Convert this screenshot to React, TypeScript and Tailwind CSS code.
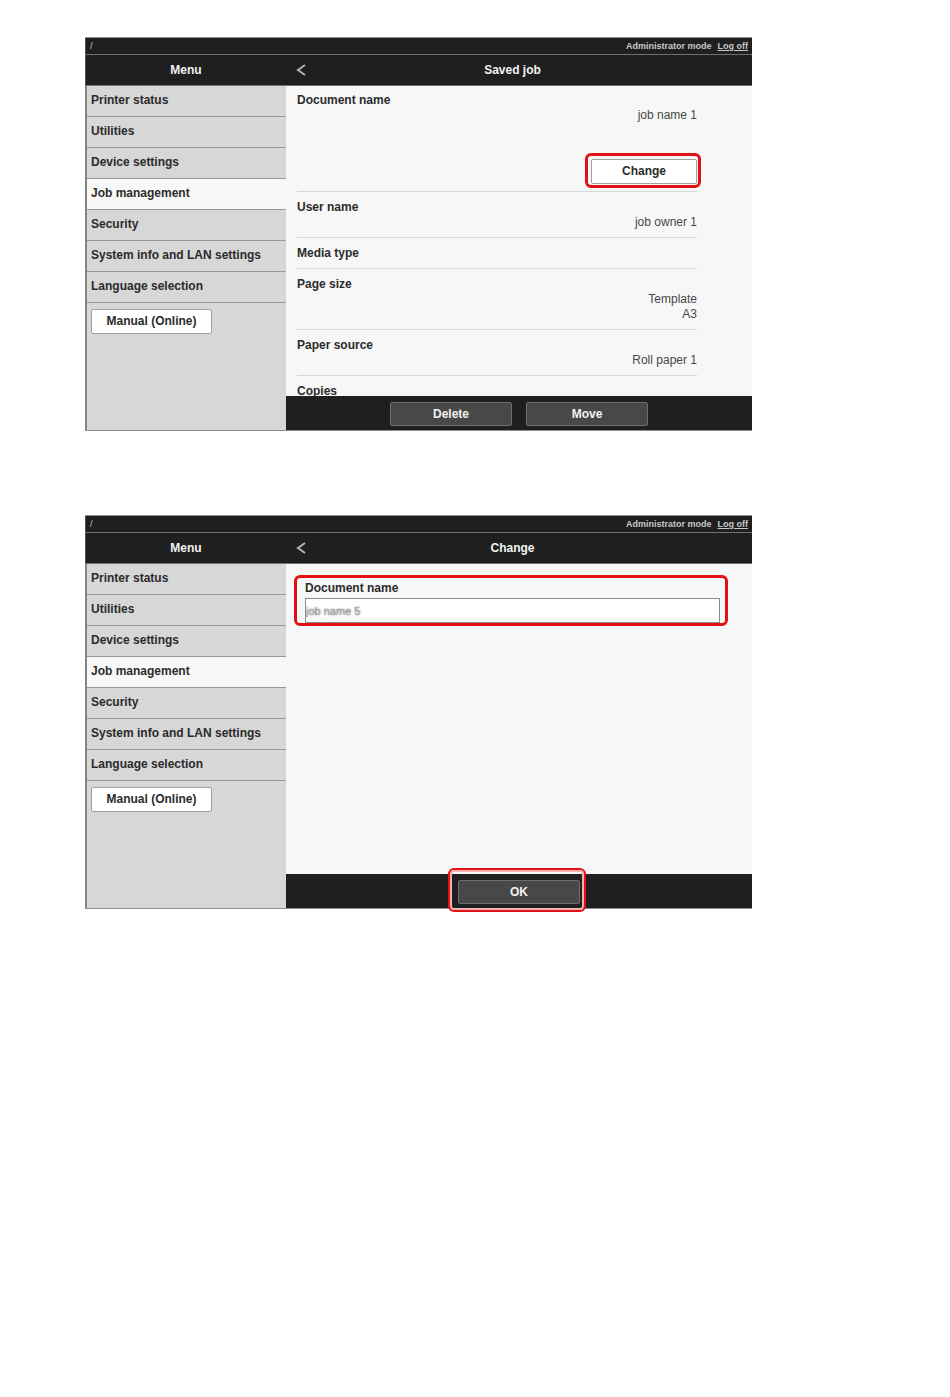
import type { ReactNode } from 'react';

const MENU_ITEMS = [
  'Printer status',
  'Utilities',
  'Device settings',
  'Job management',
  'Security',
  'System info and LAN settings',
  'Language selection',
];

const ACTIVE_ITEM = 'Job management';

function Highlight({ className }: { className: string }) {
  return (
    <span
      aria-hidden="true"
      className={`pointer-events-none absolute rounded-md border-[#e31114] ${className}`}
    />
  );
}

function LightButton({ children, className }: { children: ReactNode; className: string }) {
  return (
    <button
      type="button"
      className={`h-[25px] rounded-xs border border-[#a0a0a0] bg-white text-center font-bold text-[#2b2b2b] ${className}`}
    >
      {children}
    </button>
  );
}

function DarkButton({ children }: { children: ReactNode }) {
  return (
    <button
      type="button"
      className="h-6 w-[122px] rounded-xs border border-[#6e6e6e] bg-[#484848] text-center font-bold text-[#f2f2f2]"
    >
      {children}
    </button>
  );
}

function Sidebar() {
  return (
    <nav className="w-[201px] shrink-0 border-l-2 border-[#858585] bg-[#d7d7d7]">
      <ul className="font-bold text-[#2b2b2b]">
        {MENU_ITEMS.map((item) => (
          <li
            key={item}
            className={`border-b border-[#999999] ${item === ACTIVE_ITEM ? 'bg-[#f8f8f8]' : ''}`}
          >
            <a
              href="#"
              aria-current={item === ACTIVE_ITEM ? 'page' : undefined}
              className="block pt-[7px] pb-2 pl-1 whitespace-nowrap"
            >
              {item}
            </a>
          </li>
        ))}
      </ul>
      <LightButton className="mt-1.5 ml-1 w-[121px]">Manual (Online)</LightButton>
    </nav>
  );
}

function Screen({
  title,
  footer,
  children,
}: {
  title: string;
  footer: ReactNode;
  children: ReactNode;
}) {
  return (
    <section className="w-full max-w-[667px] border-y border-[#8c8c8c]">
      <div className="flex h-4 items-center justify-between border-l border-[#555555] bg-[#1f1f1f] pr-1 pl-1 text-[9px] leading-4 font-bold text-[#c8c8c8]">
        <span className="font-normal">/</span>
        <div className="flex gap-1.5">
          <span>Administrator mode</span>
          <a href="#" className="underline">
            Log off
          </a>
        </div>
      </div>
      <header className="flex h-8 items-center border-y border-l border-y-[#707070] border-l-[#555555] bg-[#1f1f1f] font-bold text-[#f2f2f2]">
        <h2 className="w-[200px] shrink-0 text-center">Menu</h2>
        <button type="button" aria-label="Back" className="flex w-8 shrink-0 pl-2.5">
          <svg width="10" height="12" viewBox="0 0 10 12" fill="none" stroke="#b4b4b4" strokeWidth="2">
            <path d="M9 1 L2 6 L9 11" />
          </svg>
        </button>
        <h1 className="flex-1 pr-[45px] text-center">{title}</h1>
      </header>
      <div className="flex">
        <Sidebar />
        <div className="flex min-w-0 flex-1 flex-col bg-[#f7f7f7]">
          {children}
          <footer className="flex justify-center gap-3.5 bg-[#1f1f1f] pt-1.5 pb-1">{footer}</footer>
        </div>
      </div>
    </section>
  );
}

function Field({ label, values, action }: { label: string; values: string[]; action?: ReactNode }) {
  return (
    <div className="border-b border-[#d8d8d8] pt-2 pb-[7px] first:pt-[7px]">
      <dt className="font-bold text-[#2b2b2b]">{label}</dt>
      {values.map((value) => (
        <dd key={value} className="text-right text-[#484848]">
          {value}
        </dd>
      ))}
      {action}
    </div>
  );
}

export default function App() {
  return (
    <main className="flex flex-col gap-[84px] bg-white pt-[37px] pr-6 pb-16 pl-[85px] font-['Liberation_Sans',Arial,sans-serif] text-[12px] leading-[15px]">
      <Screen
        title="Saved job"
        footer={
          <>
            <DarkButton>Delete</DarkButton>
            <DarkButton>Move</DarkButton>
          </>
        }
      >
        <dl className="h-[310px] overflow-hidden pr-[55px] pl-[11px]">
          <Field
            label="Document name"
            values={['job name 1']}
            action={
              <dd className="mt-9 flex justify-end">
                <div className="relative flex">
                  <LightButton className="w-[106px]">Change</LightButton>
                  <Highlight className="-top-1.5 -right-1 -bottom-1 -left-1.5 border-3" />
                </div>
              </dd>
            }
          />
          <Field label="User name" values={['job owner 1']} />
          <Field label="Media type" values={[]} />
          <Field label="Page size" values={['Template', 'A3']} />
          <Field label="Paper source" values={['Roll paper 1']} />
          <Field label="Copies" values={[]} />
        </dl>
      </Screen>

      <Screen
        title="Change"
        footer={
          <div className="relative flex">
            <DarkButton>OK</DarkButton>
            <Highlight className="-top-3 -right-1.5 -bottom-2 -left-2.5 border-2 shadow-[inset_0_0_0_2px_#f7b0b0]" />
          </div>
        }
      >
        <div className="h-[310px] pt-[11px] pr-6 pl-2">
          <div className="rounded-md border-3 border-[#e31114] pt-[3px] pr-[5px] pl-2">
            <label htmlFor="document-name" className="block pb-0.5 font-bold text-[#2b2b2b]">
              Document name
            </label>
            <input
              id="document-name"
              type="text"
              defaultValue="job name 5"
              className="block h-[25px] w-full border border-[#8a8a8a] bg-white text-[11px] text-[#77777755] [text-shadow:0_0_2px_#666666]"
            />
          </div>
        </div>
      </Screen>
    </main>
  );
}
